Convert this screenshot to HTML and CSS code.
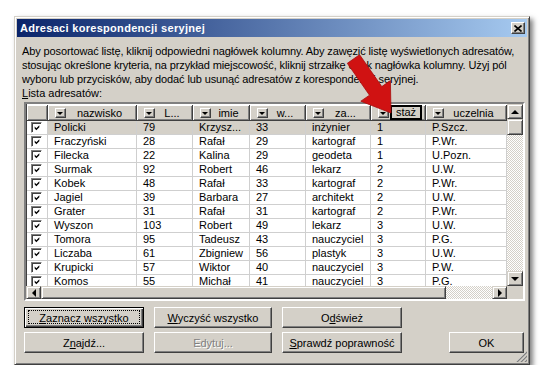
FILE: index.html
```html
<!DOCTYPE html>
<html lang="pl">
<head>
  <meta charset="UTF-8" />
  <title>Adresaci korespondencji seryjnej</title>
  <link rel="stylesheet" href="styles.css">
</head>
<body>
  <svg class="defs" width="0" height="0">
    <symbol id="chk" viewBox="0 0 9 9">
      <polygon points="1,3 3.5,5.5 8,1 8,4 3.5,8.5 1,6" fill="#000"/>
    </symbol>
  </svg>

  <div class="window">
    <div class="titlebar">
      <span class="title">Adresaci korespondencji seryjnej</span>
      <span class="close">
        <svg width="8" height="7" viewBox="0 0 8 7"><path d="M0.5 0.5 L7.5 6.5 M7.5 0.5 L0.5 6.5" stroke="#000" stroke-width="1.6"/></svg>
      </span>
    </div>

    <div class="content">
      <p class="intro">Aby posortować listę, kliknij odpowiedni nagłówek kolumny. Aby zawęzić listę wyświetlonych adresatów,<br>stosując określone kryteria, na przykład miejscowość, kliknij strzałkę obok nagłówka kolumny. Użyj pól<br>wyboru lub przycisków, aby dodać lub usunąć adresatów z korespondencji seryjnej.</p>
      <div class="label"><u>L</u>ista adresatów:</div>

      <div class="frame">
        <div class="frame-main">
          <div class="list">
            <div class="row head">
              <div class="hc"></div>
              <div class="hc"><span class="dd"></span><span class="hl">nazwisko</span></div>
              <div class="hc"><span class="dd"></span><span class="hl">L...</span></div>
              <div class="hc"><span class="dd"></span><span class="hl">imie</span></div>
              <div class="hc"><span class="dd"></span><span class="hl">w...</span></div>
              <div class="hc"><span class="dd"></span><span class="hl">za...</span></div>
              <div class="hc sel"><span class="dd"></span><span class="hl">staż</span></div>
              <div class="hc"><span class="dd"></span><span class="hl">uczelnia</span></div>
            </div>
            <div class="row selected">
              <div class="cb"><svg><use href="#chk"/></svg></div><div>Policki</div><div>79</div><div>Krzysz...</div><div>33</div><div>inżynier</div><div>1</div><div>P.Szcz.</div>
            </div>
            <div class="row">
              <div class="cb"><svg><use href="#chk"/></svg></div><div>Fraczyński</div><div>28</div><div>Rafał</div><div>29</div><div>kartograf</div><div>1</div><div>P.Wr.</div>
            </div>
            <div class="row">
              <div class="cb"><svg><use href="#chk"/></svg></div><div>Filecka</div><div>22</div><div>Kalina</div><div>29</div><div>geodeta</div><div>1</div><div>U.Pozn.</div>
            </div>
            <div class="row">
              <div class="cb"><svg><use href="#chk"/></svg></div><div>Surmak</div><div>92</div><div>Robert</div><div>46</div><div>lekarz</div><div>2</div><div>U.W.</div>
            </div>
            <div class="row">
              <div class="cb"><svg><use href="#chk"/></svg></div><div>Kobek</div><div>48</div><div>Rafał</div><div>33</div><div>kartograf</div><div>2</div><div>P.Wr.</div>
            </div>
            <div class="row">
              <div class="cb"><svg><use href="#chk"/></svg></div><div>Jagiel</div><div>39</div><div>Barbara</div><div>27</div><div>architekt</div><div>2</div><div>U.W.</div>
            </div>
            <div class="row">
              <div class="cb"><svg><use href="#chk"/></svg></div><div>Grater</div><div>31</div><div>Rafał</div><div>31</div><div>kartograf</div><div>2</div><div>P.Wr.</div>
            </div>
            <div class="row">
              <div class="cb"><svg><use href="#chk"/></svg></div><div>Wyszon</div><div>103</div><div>Robert</div><div>49</div><div>lekarz</div><div>3</div><div>U.W.</div>
            </div>
            <div class="row">
              <div class="cb"><svg><use href="#chk"/></svg></div><div>Tomora</div><div>95</div><div>Tadeusz</div><div>43</div><div>nauczyciel</div><div>3</div><div>P.G.</div>
            </div>
            <div class="row">
              <div class="cb"><svg><use href="#chk"/></svg></div><div>Liczaba</div><div>61</div><div>Zbigniew</div><div>56</div><div>plastyk</div><div>3</div><div>U.W.</div>
            </div>
            <div class="row">
              <div class="cb"><svg><use href="#chk"/></svg></div><div>Krupicki</div><div>57</div><div>Wiktor</div><div>40</div><div>nauczyciel</div><div>3</div><div>P.W.</div>
            </div>
            <div class="row">
              <div class="cb"><svg><use href="#chk"/></svg></div><div>Komos</div><div>55</div><div>Michał</div><div>41</div><div>nauczyciel</div><div>3</div><div>P.G.</div>
            </div>
          </div>
          <div class="vscroll">
            <div class="sb-btn up"></div>
            <div class="thumb v"></div>
            <div class="track"></div>
            <div class="sb-btn down"></div>
          </div>
        </div>
        <div class="frame-bottom">
          <div class="hscroll">
            <div class="sb-btn left"></div>
            <div class="thumb h"></div>
            <div class="track"></div>
            <div class="sb-btn right"></div>
          </div>
          <div class="corner"></div>
        </div>
      </div>

      <div class="buttons">
        <button class="btn default"><u>Z</u>aznacz wszystko</button>
        <button class="btn"><u>W</u>yczyść wszystko</button>
        <button class="btn">O<u>d</u>śwież</button>
        <span></span>
        <span></span>
        <button class="btn">Z<u>n</u>ajdź...</button>
        <button class="btn disabled">Edytuj...</button>
        <button class="btn"><u>S</u>prawdź poprawność</button>
        <span></span>
        <button class="btn">OK</button>
      </div>
    </div>

    <svg class="grip" width="11" height="11" viewBox="0 0 11 11">
      <path d="M10 1 L1 10 M10 5 L5 10 M10 9 L9 10" stroke="#fff" stroke-width="1"/>
      <path d="M11 1 L1 11 M11 5 L5 11 M11 9 L9 11" stroke="#808080" stroke-width="1.4"/>
    </svg>
  </div>

  <svg class="arrow" width="548" height="379" viewBox="0 0 548 379">
    <polygon points="347.3,63.3 369.5,95.2 360.8,101.2 391,113 390.4,80.6 381.8,86.6 359.6,54.7" fill="#d01212" stroke="#a80c0c" stroke-width="0.8" stroke-linejoin="round"/>
  </svg>
</body>
</html>
```

FILE: styles.css
```css
body {
  margin: 0;
  background: #ffffff;
  font-family: "Liberation Sans", Arial, sans-serif;
  font-size: 11px;
  color: #000;
}

.defs {
  position: absolute;
}

.window {
  position: relative;
  width: 510px;
  height: 343px;
  margin: 16px 0 0 14px;
  padding: 2px;
  background: #d4d0c8;
  border: 1px solid;
  border-color: #d4d0c8 #404040 #404040 #d4d0c8;
  box-shadow: inset 1px 1px #fff, inset -1px -1px #808080, 3px 3px 5px rgba(0, 0, 0, 0.5);
}

.titlebar {
  height: 18px;
  display: flex;
  align-items: center;
  justify-content: space-between;
  padding: 0 2px 0 3px;
  background: linear-gradient(to right, #0a246a, #a6caf0);
}

.title {
  color: #fff;
  font-weight: bold;
  font-size: 11px;
  letter-spacing: 0.3px;
}

.close {
  width: 14px;
  height: 12px;
  box-sizing: border-box;
  display: flex;
  align-items: center;
  justify-content: center;
  background: #d4d0c8;
  border: 1px solid;
  border-color: #fff #404040 #404040 #fff;
  box-shadow: inset -1px -1px #808080;
}

.content {
  padding: 7px 2px 0 5px;
}

.intro {
  margin: 0;
  line-height: 14px;
  white-space: nowrap;
  letter-spacing: -0.12px;
}

.label {
  line-height: 14px;
}

.frame {
  margin: 2px 0 0 2px;
  height: 195px;
  border: 2px solid;
  border-color: #808080 #fff #fff #808080;
  box-shadow: inset 1px 1px #404040;
  display: flex;
  flex-direction: column;
}

.frame-main {
  display: flex;
  height: 182px;
}

.list {
  width: 481px;
  overflow: hidden;
  background: #fff;
  padding-top: 1px;
  margin-left: 1px;
}

.row {
  display: grid;
  grid-template-columns: 21px 89px 56px 57px 56px 65px 55px 81px;
  height: 14px;
}

.row > div {
  box-sizing: border-box;
  border-right: 1px solid #cfcfcf;
  border-bottom: 1px solid #cfcfcf;
  padding-left: 6px;
  line-height: 13px;
  white-space: nowrap;
  overflow: hidden;
}

.row.selected > div {
  background: #d4d0c8;
}

.row.selected > .cb {
  background: #fff;
}

.row > .cb {
  padding: 1px 0 0 4px;
}

.cb svg {
  width: 11px;
  height: 11px;
  box-sizing: border-box;
  border: 1px solid;
  border-color: #808080 #fff #fff #808080;
  box-shadow: inset 1px 1px #404040;
  padding: 1px 1px 1px 2px;
  background: #fff;
  display: block;
}

.row.head {
  height: 16px;
}

.row.head > .hc {
  display: flex;
  align-items: center;
  padding: 0 3px 0 7px;
  background: #d4d0c8;
  border-right: 1px solid #404040;
  border-bottom: 1px solid #404040;
  box-shadow: inset 1px 1px #fff, inset -1px -1px #808080;
  line-height: 14px;
}

.dd {
  flex: none;
  width: 11px;
  height: 10px;
  box-sizing: border-box;
  display: flex;
  align-items: center;
  justify-content: center;
  background: #d4d0c8;
  border: 1px solid;
  border-color: #fff #404040 #404040 #fff;
  box-shadow: inset -1px -1px #808080;
}

.dd::before {
  content: "";
  margin: 1px 1px 0 0;
  border-left: 3px solid transparent;
  border-right: 3px solid transparent;
  border-top: 3px solid #000;
}

.hl {
  flex: 1;
  text-align: center;
  overflow: hidden;
}

.hc.sel {
  padding-right: 0;
}

.hc.sel .hl {
  align-self: stretch;
  margin-left: 1px;
  border: 2px solid #000;
  line-height: 11px;
}

.vscroll {
  width: 16px;
  display: flex;
  flex-direction: column;
}

.sb-btn,
.thumb {
  box-sizing: border-box;
  background: #d4d0c8;
  border: 1px solid;
  border-color: #d4d0c8 #404040 #404040 #d4d0c8;
  box-shadow: inset 1px 1px #fff, inset -1px -1px #808080;
  display: flex;
  align-items: center;
  justify-content: center;
}

.vscroll .sb-btn {
  height: 15px;
}

.thumb.v {
  height: 16px;
}

.track {
  flex: 1;
  background: repeating-conic-gradient(#ffffff 0 25%, #d4d0c8 0 50%) 0 0 / 2px 2px;
}

.sb-btn::before {
  content: "";
  width: 0;
  height: 0;
}

.up::before {
  border-left: 4px solid transparent;
  border-right: 4px solid transparent;
  border-bottom: 4px solid #000;
}

.down::before {
  border-left: 4px solid transparent;
  border-right: 4px solid transparent;
  border-top: 4px solid #000;
}

.left::before {
  border-top: 4px solid transparent;
  border-bottom: 4px solid transparent;
  border-right: 4px solid #000;
}

.right::before {
  border-top: 4px solid transparent;
  border-bottom: 4px solid transparent;
  border-left: 4px solid #000;
}

.frame-bottom {
  display: flex;
  height: 13px;
}

.hscroll {
  width: 481px;
  display: flex;
}

.hscroll .sb-btn {
  width: 15px;
}

.thumb.h {
  width: 405px;
}

.corner {
  flex: 1;
  background: #d4d0c8;
}

.buttons {
  margin: 6px 1px 0 2px;
  display: grid;
  grid-template-columns: 120px 118px 120px 1fr 75px;
  grid-template-rows: 21px 21px;
  column-gap: 10px;
  row-gap: 4px;
}

.btn {
  position: relative;
  padding: 0;
  margin: 0;
  font-family: inherit;
  font-size: 11px;
  color: #000;
  background: #d4d0c8;
  border: 1px solid;
  border-color: #fff #404040 #404040 #fff;
  box-shadow: inset -1px -1px #808080;
}

.btn.default {
  border-color: #000;
  box-shadow: inset 1px 1px #fff, inset -1px -1px #404040, inset -2px -2px #808080;
}

.btn.default::after {
  content: "";
  position: absolute;
  inset: 2px 3px 3px 3px;
  border: 1px dotted #000;
}

.btn.disabled {
  color: #808080;
  text-shadow: 1px 1px #fff;
}

.grip {
  position: absolute;
  right: 2px;
  bottom: 2px;
}

.arrow {
  position: absolute;
  left: 0;
  top: 0;
  pointer-events: none;
}
```
